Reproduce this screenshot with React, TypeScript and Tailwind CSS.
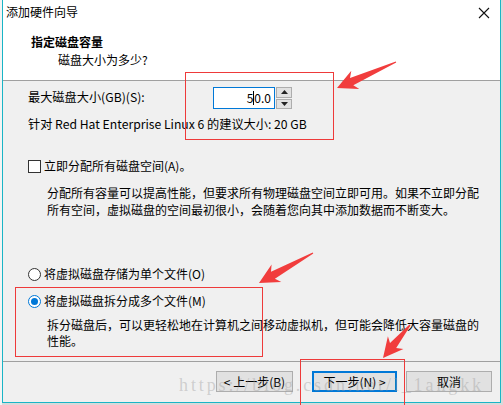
const arrow = (x1: number, y1: number, x2: number, y2: number) => {
    // tapered annotation arrow: thin tail, wide head
    const dx = x2 - x1, dy = y2 - y1
    const len = Math.hypot(dx, dy)
    const ux = dx / len, uy = dy / len
    const nx = -uy, ny = ux
    const head = 20, hw = 10, sw = 4, tw = 0.6
    const bx = x2 - ux * head, by = y2 - uy * head
    const sx = x2 - ux * (head - 4), sy = y2 - uy * (head - 4)
    const pts = [
        [x1 + nx * tw, y1 + ny * tw],
        [sx + nx * sw, sy + ny * sw],
        [bx + nx * hw, by + ny * hw],
        [x2, y2],
        [bx - nx * hw, by - ny * hw],
        [sx - nx * sw, sy - ny * sw],
        [x1 - nx * tw, y1 - ny * tw],
    ]
    return pts.map(p => p[0].toFixed(1) + ',' + p[1].toFixed(1)).join(' ')
}

const Btn = ({ label, primary = false, className = '' }: { label: string, primary?: boolean, className?: string }) => (
    <div className={`h-[21px] flex items-center justify-center bg-[#e1e1e1] text-[12px] ${primary ? 'border-2 border-[#0078d7]' : 'border border-[#adadad]'} ${className}`}>
        {label}
    </div>
)

const App = () => {
    return (
        <div className="relative w-[503px] h-[405px] overflow-hidden bg-[#d9d9d9] font-['Noto_Sans_CJK_SC',sans-serif] text-[12px] text-black">
            <div className="absolute left-0 top-0 w-[2px] h-[405px] bg-[#f4f4f4]" />
            <div className="ml-[2px] w-[499px] h-[403px] border-l border-r border-b border-[#19b5c6] bg-[#f0f0f0] flex flex-col">
                {/* header */}
                <div className="bg-white h-[81px] border-b border-[#a0a0a0] flex flex-col">
                    <div className="h-[24px] flex items-center justify-between pl-[3px] pr-[10px]">
                        <span className="leading-[16px] text-[12px]">添加硬件向导</span>
                        <svg width="12" height="12" viewBox="0 0 12 12" className="mt-[2px]">
                            <path d="M1 1 L11 11 M11 1 L1 11" stroke="#111" strokeWidth="1.1" />
                        </svg>
                    </div>
                    <div className="pl-[28px] mt-[10px] font-bold leading-[16px]">指定磁盘容量</div>
                    <div className="pl-[55px] mt-[2px] leading-[16px]">磁盘大小为多少?</div>
                </div>

                {/* body */}
                <div className="pl-[25px] flex flex-col">
                    <div className="mt-[6px] h-[22px] flex items-center">
                        <span className="w-[185px] leading-[16px] -mt-[2px] text-[12.2px]">最大磁盘大小(GB)(S):</span>
                        <div className="w-[62px] h-[22px] bg-white border border-[#0078d7] flex items-center justify-end pr-[3px] leading-[16px]">
                            <span>5</span><span className="w-px h-[14px] bg-black" /><span>0.0</span>
                        </div>
                        <div className="w-[16px] h-[22px] ml-px flex flex-col gap-px">
                            <div className="flex-1 bg-[#e1e1e1] border border-[#adadad] flex items-center justify-center">
                                <svg width="7" height="4" viewBox="0 0 7 4"><path d="M0 4 L3.5 0 L7 4 Z" fill="#222" /></svg>
                            </div>
                            <div className="flex-1 bg-[#e1e1e1] border border-[#adadad] flex items-center justify-center">
                                <svg width="7" height="4" viewBox="0 0 7 4"><path d="M0 0 L3.5 4 L7 0 Z" fill="#222" /></svg>
                            </div>
                        </div>
                    </div>
                    <div className="mt-[7px] h-[16px] leading-[16px] text-[12.2px]">针对 Red Hat Enterprise Linux 6 的建议大小: 20 GB</div>

                    <div className="mt-[26px] h-[16px] flex items-center">
                        <div className="w-[13px] h-[13px] bg-white border border-[#333]" />
                        <span className="ml-[3px] leading-[16px]">立即分配所有磁盘空间(A)。</span>
                    </div>
                    <div className="mt-[10px] pl-[19px] pr-[20px] leading-[17px]">
                        分配所有容量可以提高性能，但要求所有物理磁盘空间立即可用。如果不立即分配所有空间，虚拟磁盘的空间最初很小，会随着您向其中添加数据而不断变大。
                    </div>

                    <div className="mt-[48px] h-[16px] flex items-center">
                        <div className="w-[13px] h-[13px] rounded-full bg-white border border-[#333]" />
                        <span className="ml-[3px] leading-[16px]">将虚拟磁盘存储为单个文件(O)</span>
                    </div>
                    <div className="mt-[11px] h-[16px] flex items-center">
                        <div className="w-[13px] h-[13px] rounded-full bg-white border border-[#0078d7] flex items-center justify-center">
                            <div className="w-[7px] h-[7px] rounded-full bg-[#0078d7]" />
                        </div>
                        <span className="ml-[3px] leading-[16px]">将虚拟磁盘拆分成多个文件(M)</span>
                    </div>
                    <div className="mt-[8px] pl-[19px] pr-[20px] leading-[16px]">
                        拆分磁盘后，可以更轻松地在计算机之间移动虚拟机，但可能会降低大容量磁盘的性能。
                    </div>
                </div>

                {/* footer */}
                <div className="mt-auto h-[41px] border-t border-[#a0a0a0] flex justify-end items-start pt-[9px] pr-[8px]">
                    <Btn label="< 上一步(B)" className="w-[77px]" />
                    <Btn label="下一步(N) >" primary className="w-[85px] ml-[19px]" />
                    <Btn label="取消" className="w-[86px] ml-[9px]" />
                </div>
            </div>

            {/* watermark */}
            <div className="absolute left-[179px] top-[372px] font-['Liberation_Serif',serif] text-[18px] tracking-[2.9px] text-[#9a9a9a]/40 pointer-events-none">
                https://blog.csdn.net/l_1angkk
            </div>

            {/* red annotations */}
            <div className="absolute left-[185px] top-[72px] w-[149px] h-[68px] border border-[#ee3a3a]" />
            <div className="absolute left-[15px] top-[287px] w-[248px] h-[70px] border border-[#ee3a3a]" />
            <div className="absolute left-[300px] top-[359px] w-[105px] h-[60px] border border-[#ee3a3a]" />
            <svg className="absolute left-0 top-0 pointer-events-none" width="503" height="405">
                <polygon points={arrow(396, 62, 337, 88)} fill="#f13d3d" />
                <polygon points={arrow(313, 253, 259, 283)} fill="#f13d3d" />
                <polygon points={arrow(410, 325, 383, 358)} fill="#f13d3d" />
            </svg>
        </div>
    )
}

export default App
